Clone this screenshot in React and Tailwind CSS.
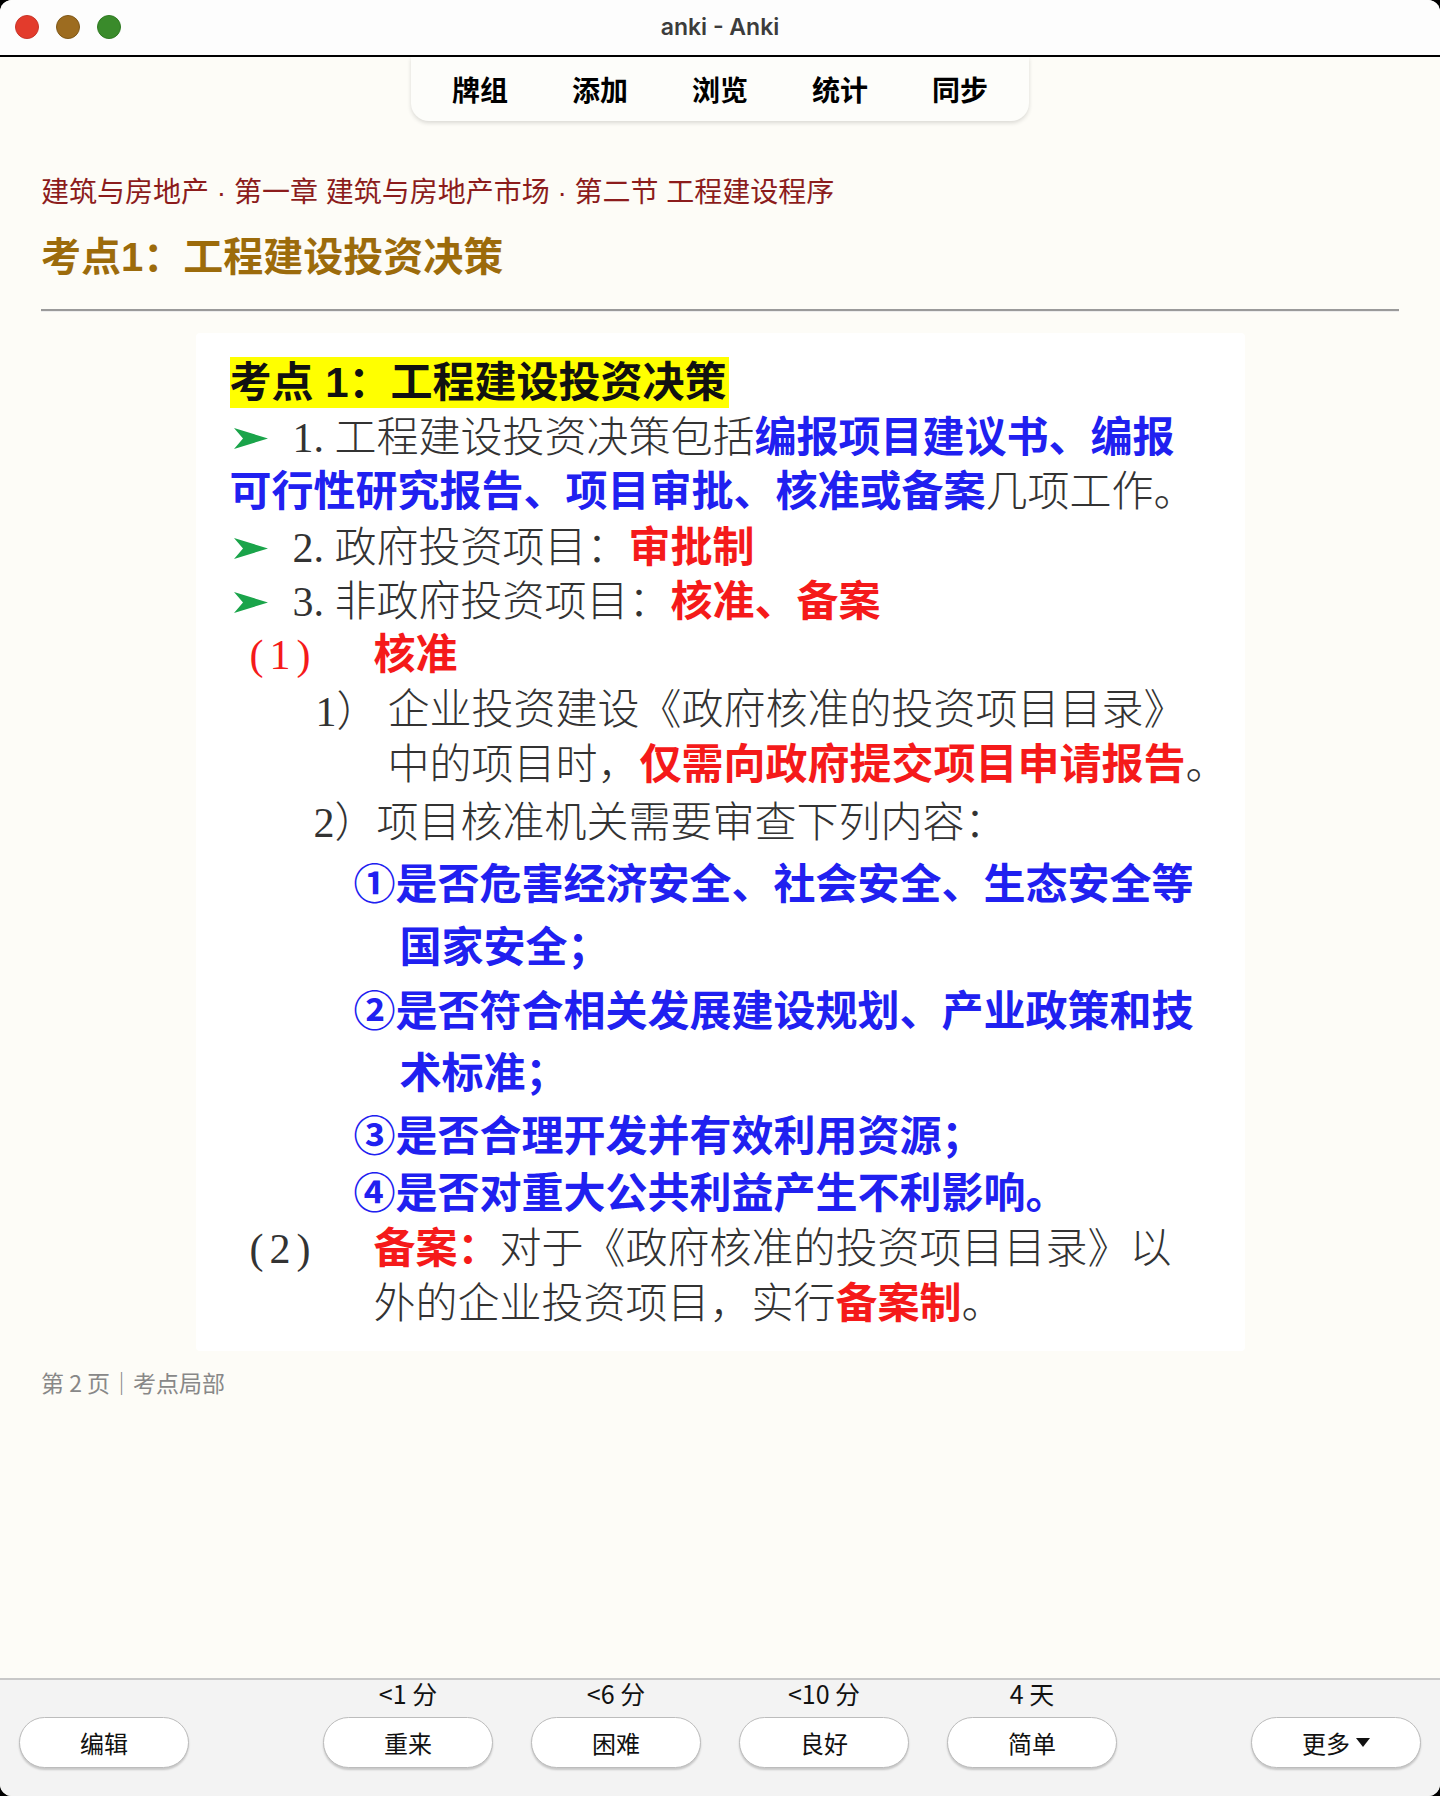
import React from 'react';

const ui = { fontFamily: '"Noto Sans CJK SC", "Noto Sans", sans-serif' };
const song = { fontFamily: '"Liberation Serif", "Noto Sans CJK SC", serif' };
const hei = { fontFamily: '"Liberation Sans", "Noto Sans CJK SC", sans-serif' };

function Arrow() {
  return (
    <svg width="34" height="21" viewBox="0 0 34 21" className="shrink-0">
      <path d="M0 0 L34 10.5 L0 21 L9 10.5 Z" fill="#1aa44a" />
    </svg>
  );
}

// one line of the slide picture; mt is the extra gap above it
function Line({ mt = 0, pl = 0, children }) {
  return (
    <div
      className="flex h-[54px] items-center whitespace-nowrap text-[42px] leading-none"
      style={{ marginTop: mt, paddingLeft: pl }}
    >
      {children}
    </div>
  );
}

const Blk = ({ children }) => (
  <span className="font-light text-[#333]" style={song}>
    {children}
  </span>
);
const Blue = ({ children }) => (
  <span className="font-bold text-[#2020f0]" style={hei}>
    {children}
  </span>
);
const Red = ({ children }) => (
  <span className="font-bold text-[#f51a1a]" style={hei}>
    {children}
  </span>
);

function Slide() {
  return (
    <div className="mx-auto w-[1049px] rounded-[4px] bg-white pb-[20px] pl-[34px] pt-[24px]">
      <div className="inline-flex h-[51px] items-center bg-[#ffff00] pr-[2px]">
        <span className="text-[42px] font-bold leading-none text-[#111]" style={hei}>
          考点 1：工程建设投资决策
        </span>
      </div>
      <Line mt={3} pl={4}>
        <Arrow />
        <span className="ml-[25px]" />
        <Blk>1. 工程建设投资决策包括</Blk>
        <Blue>编报项目建议书、编报</Blue>
      </Line>
      <Line>
        <Blue>可行性研究报告、项目审批、核准或备案</Blue>
        <Blk>几项工作。</Blk>
      </Line>
      <Line mt={2} pl={4}>
        <Arrow />
        <span className="ml-[25px]" />
        <Blk>2. 政府投资项目：</Blk>
        <Red>审批制</Red>
      </Line>
      <Line pl={4}>
        <Arrow />
        <span className="ml-[25px]" />
        <Blk>3. 非政府投资项目：</Blk>
        <Red>核准、备案</Red>
      </Line>
      <Line mt={-1} pl={20}>
        <span className="w-[124px] font-light tracking-[6px] text-[#f51a1a]" style={song}>
          (1)
        </span>
        <Red>核准</Red>
      </Line>
      <Line mt={1} pl={86}>
        <span className="w-[72px]">
          <Blk>1）</Blk>
        </span>
        <Blk>企业投资建设《政府核准的投资项目目录》</Blk>
      </Line>
      <Line mt={1} pl={158}>
        <Blk>中的项目时，</Blk>
        <Red>仅需向政府提交项目申请报告</Red>
        <Blk>。</Blk>
      </Line>
      <Line mt={4} pl={84}>
        <Blk>2）项目核准机关需要审查下列内容：</Blk>
      </Line>
      <Line mt={8} pl={124}>
        <Blue>①是否危害经济安全、社会安全、生态安全等</Blue>
      </Line>
      <Line mt={9} pl={170}>
        <Blue>国家安全；</Blue>
      </Line>
      <Line mt={10} pl={124}>
        <Blue>②是否符合相关发展建设规划、产业政策和技</Blue>
      </Line>
      <Line mt={8} pl={170}>
        <Blue>术标准；</Blue>
      </Line>
      <Line mt={9} pl={124}>
        <Blue>③是否合理开发并有效利用资源；</Blue>
      </Line>
      <Line mt={3} pl={124}>
        <Blue>④是否对重大公共利益产生不利影响。</Blue>
      </Line>
      <Line mt={1} pl={20}>
        <span className="w-[124px] font-light tracking-[6px] text-[#333]" style={song}>
          (2)
        </span>
        <Red>备案：</Red>
        <Blk>对于《政府核准的投资项目目录》以</Blk>
      </Line>
      <Line mt={1} pl={144}>
        <Blk>外的企业投资项目，实行</Blk>
        <Red>备案制</Red>
        <Blk>。</Blk>
      </Line>
    </div>
  );
}

function Btn({ children }) {
  return (
    <button className="flex h-[51px] w-[170px] items-center justify-center rounded-full border border-[#bcbcbc] bg-white text-[24px] text-[#111] shadow-[0_2px_2px_rgba(0,0,0,0.18)]">
      {children}
    </button>
  );
}

const answers = [
  ['<1 分', '重来'],
  ['<6 分', '困难'],
  ['<10 分', '良好'],
  ['4 天', '简单'],
];

export default function App() {
  return (
    <div className="h-[1796px] w-[1440px] bg-black" style={ui}>
      <div className="flex h-full flex-col overflow-hidden rounded-[12px] bg-[#fdfcf7]">
        {/* title bar */}
        <div className="relative flex h-[57px] shrink-0 items-center justify-center border-b-2 border-black bg-[#fdfdfd]">
          <div className="absolute left-[15px] top-[15px] flex gap-[17px]">
            <span className="h-[24px] w-[24px] rounded-full border border-[#c8352a] bg-[#e33b2c]" />
            <span className="h-[24px] w-[24px] rounded-full border border-[#7f5818] bg-[#9d6c20]" />
            <span className="h-[24px] w-[24px] rounded-full border border-[#2f7a22] bg-[#3a8b2b]" />
          </div>
          <span className="text-[23px] font-semibold text-[#3c3c3c]" style={{ fontFamily: 'Inter, "Liberation Sans", sans-serif' }}>
            anki - Anki
          </span>
        </div>

        {/* main */}
        <div className="flex-1 px-[41px]">
          <div className="mx-auto flex h-[64px] w-[618px] items-center rounded-b-[18px] bg-[#fdfdfa] px-[9px] shadow-[0_2px_4px_rgba(0,0,0,0.14)]">
            {['牌组', '添加', '浏览', '统计', '同步'].map((t) => (
              <div key={t} className="w-[120px] text-center text-[28px] font-bold text-black">
                {t}
              </div>
            ))}
          </div>

          <div className="mt-[54px] h-[36px] text-[28px] leading-[36px] text-[#8c1c1c]" style={hei}>
            建筑与房地产 · 第一章 建筑与房地产市场 · 第二节 工程建设程序
          </div>
          <div className="mt-[21px] h-[50px] text-[40px] font-bold leading-[50px] text-[#9c6b0b]" style={hei}>
            考点1：工程建设投资决策
          </div>
          <div className="mt-[27px] border-t-2 border-b border-t-[#9a9a9a] border-b-[#ececec]" />

          <div className="mt-[21px]">
            <Slide />
          </div>

          <div className="mt-[16px] h-[30px] text-[23px] leading-[30px] text-[#888]">
            第 2 页｜考点局部
          </div>
        </div>

        {/* answer bar */}
        <div className="flex h-[118px] shrink-0 items-end justify-between border-t-2 border-[#c8c8c8] bg-[#f3f3f3] px-[19px] pb-[28px]">
          <Btn>编辑</Btn>
          <div className="flex gap-[38px]">
            {answers.map(([ivl, label]) => (
              <div key={label} className="flex flex-col items-center">
                <div className="h-[26px] text-[25px] leading-[26px] text-[#111]">{ivl}</div>
                <div className="mt-[11px]">
                  <Btn>{label}</Btn>
                </div>
              </div>
            ))}
          </div>
          <Btn>
            更多
            <svg width="14" height="9" viewBox="0 0 14 9" className="ml-[6px]">
              <path d="M0 0 L14 0 L7 9 Z" fill="#111" />
            </svg>
          </Btn>
        </div>
      </div>
    </div>
  );
}
